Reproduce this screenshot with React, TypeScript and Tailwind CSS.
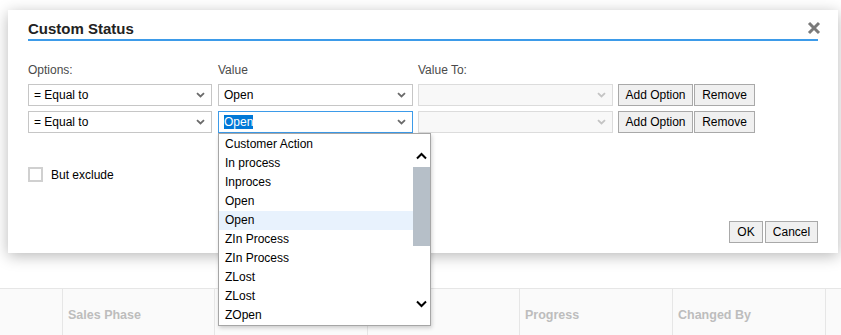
import { ReactNode } from "react";

const items = [
  "Customer Action",
  "In process",
  "Inproces",
  "Open",
  "Open",
  "ZIn Process",
  "ZIn Process",
  "ZLost",
  "ZLost",
  "ZOpen",
];

const Chevron = ({ light }: { light?: boolean }) => (
  <svg width="9" height="6" viewBox="0 0 9 6" className="shrink-0">
    <path
      d="M1 1.2l3.5 3.3L8 1.2"
      fill="none"
      stroke={light ? "#c4c4c4" : "#6b6b6b"}
      strokeWidth="1.8"
    />
  </svg>
);

const ArrowIcon = ({ down }: { down?: boolean }) => (
  <svg width="11" height="8" viewBox="0 0 11 8">
    <path
      d={down ? "M1 1.5l4.5 4.5L10 1.5" : "M1 6.5L5.5 2 10 6.5"}
      fill="none"
      stroke="#000"
      strokeWidth="2"
    />
  </svg>
);

const Select = ({
  width,
  children,
  focused,
  disabled,
}: {
  width: string;
  children?: ReactNode;
  focused?: boolean;
  disabled?: boolean;
}) => (
  <div
    className={`${width} h-[22px] flex items-center justify-between pl-[5px] pr-[6px] border text-[12px] text-black ${
      disabled
        ? "bg-[#f8f8f8] border-[#dcdcdc]"
        : focused
          ? "bg-white border-[#3d9be9]"
          : "bg-white border-[#c6c6c6]"
    }`}
  >
    <span className="leading-[14px]">{children}</span>
    <Chevron light={disabled} />
  </div>
);

const Button = ({ width, children }: { width: string; children: ReactNode }) => (
  <div
    className={`${width} h-[22px] flex items-center justify-center border border-[#a9a9a9] bg-[#f0f0f0] text-[12px] text-black`}
  >
    {children}
  </div>
);

const OptionRow = ({ focused }: { focused?: boolean }) => (
  <div className="flex">
    <Select width="w-[184px]">= Equal to</Select>
    <div className="ml-[6px]">
      <Select width="w-[195px]" focused={focused}>
        {focused ? <span className="bg-[#0078d7] text-white">Open</span> : "Open"}
      </Select>
    </div>
    <div className="ml-[5px]">
      <Select width="w-[195px]" disabled />
    </div>
    <div className="ml-[5px] flex gap-[1px]">
      <Button width="w-[75px]">Add Option</Button>
      <Button width="w-[61px]">Remove</Button>
    </div>
  </div>
);

// columns 2 and 3 are hidden behind the open list
const headerCells = [
  { w: "w-[152px]", label: "Sales Phase" },
  { w: "w-[153px]", label: "" },
  { w: "w-[152px]", label: "" },
  { w: "w-[153px]", label: "Progress" },
  { w: "w-[153px]", label: "Changed By" },
];

export default function App() {
  return (
    <div className="relative w-[841px] h-[335px] overflow-hidden bg-white font-['Liberation_Sans',Arial,sans-serif]">
      {/* page behind the dialog */}
      <div className="pt-[288px]">
        <div className="flex h-[53px] border-t border-[#e6e6e6] bg-[#fafafa]">
          <div className="w-[62px] shrink-0" />
          {headerCells.map((c, i) => (
            <div
              key={i}
              className={`${c.w} shrink-0 border-l border-[#e6e6e6] pl-[5px] flex items-center text-[12.5px] font-bold text-[#bdbdbd]`}
            >
              {c.label}
            </div>
          ))}
          <div className="flex-1 border-l border-[#e6e6e6]" />
        </div>
      </div>

      {/* dialog */}
      <div className="absolute left-[8px] top-[10px] w-[830px] h-[243px] bg-white shadow-[0_3px_14px_rgba(0,0,0,0.28)] px-[20px] pt-[10px]">
        <div className="flex items-start justify-between border-b-2 border-[#3d9be9] pb-[1px]">
          <div className="text-[15px] leading-[18px] font-bold text-[#222]">Custom Status</div>
          <svg width="14" height="14" viewBox="0 0 14 14" className="mt-[1px] -mr-[3px]">
            <path d="M2 2l10 10M12 2L2 12" stroke="#7a7a7a" strokeWidth="3" />
          </svg>
        </div>

        <div className="mt-[22px] flex text-[12px] leading-[14px] text-[#4a4a4a]">
          <div className="w-[190px]">Options:</div>
          <div className="w-[200px]">Value</div>
          <div>Value To:</div>
        </div>

        <div className="mt-[7px] flex flex-col gap-[5px]">
          <OptionRow />
          <OptionRow focused />
        </div>

        <div className="mt-[34px] flex items-center gap-[8px]">
          <div className="w-[15px] h-[15px] border-2 border-[#d0d0d0] bg-white" />
          <span className="text-[12px] leading-[14px] text-black">But exclude</span>
        </div>

        <div className="mt-[39px] flex justify-end gap-[2px]">
          <Button width="w-[34px]">OK</Button>
          <Button width="w-[53px]">Cancel</Button>
        </div>
      </div>

      {/* open dropdown list */}
      <div className="absolute left-[218px] top-[133px] w-[213px] h-[193px] bg-white border border-[#a6a6a6] shadow-[1px_2px_4px_rgba(0,0,0,0.18)]">
        <div className="relative h-full">
          <div className="pr-[17px] pt-[1px]">
            {items.map((it, i) => (
              <div
                key={i}
                className={`h-[19px] leading-[19px] pl-[6px] text-[12px] text-black ${
                  i === 4 ? "bg-[#e8f2fd]" : ""
                }`}
              >
                {it}
              </div>
            ))}
          </div>
          <div className="absolute right-0 top-0 bottom-0 w-[17px] flex flex-col items-center">
            <div className="mt-[18px] h-[8px]">
              <ArrowIcon />
            </div>
            <div className="mt-[7px] w-full h-[79px] bg-[#b6bfc8]" />
            <div className="mt-[54px] h-[8px]">
              <ArrowIcon down />
            </div>
          </div>
        </div>
      </div>
    </div>
  );
}
